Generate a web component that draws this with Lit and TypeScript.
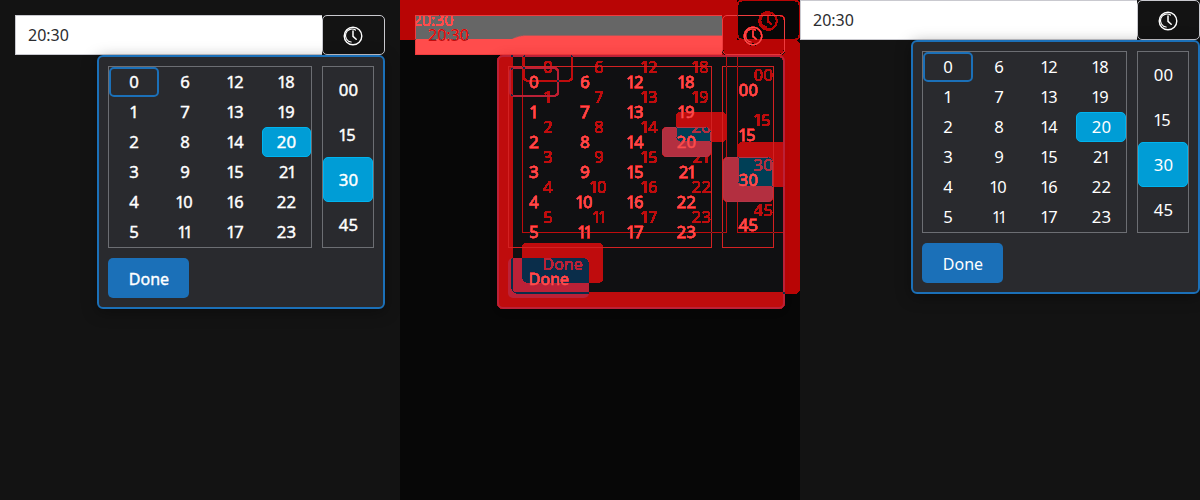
import { LitElement, html, css, svg } from "lit";
import { customElement, property } from "lit/decorators.js";

const HOURS = Array.from({ length: 24 }, (_, i) => String(i));
const MINUTES = ["00", "15", "30", "45"];

const label = (text: string) => {
  const cls = text === "11" ? "ones" : text === "21" ? "last" : text.length === 2 && text[0] === "1" ? "one" : "wide";
  return html`<span class="label ${cls}">${text}</span>`;
};

@customElement("time-picker")
class TimePicker extends LitElement {
  @property({ type: Boolean, reflect: true }) inset = false;

  static styles = css`
    :host {
      display: block;
      box-sizing: border-box;
      width: 400px;
      height: 500px;
      background: #131313;
      color: #fff;
      font: 400 16px/24px "Noto Sans", "Open Sans", sans-serif;
      overflow: hidden;
    }
    :host([inset]) {
      padding: 15px;
    }
    .picker {
      display: flex;
      flex-direction: column;
      align-items: flex-end;
    }
    .field {
      display: flex;
      width: 100%;
      height: 40px;
    }
    .value {
      flex: 1;
      box-sizing: border-box;
      padding: 7px 12px;
      border: 1px solid #c9c9cf;
      border-right: 0;
      background: #fff;
      color: #2b2c30;
    }
    .toggle {
      display: flex;
      align-items: center;
      justify-content: center;
      box-sizing: border-box;
      width: 63px;
      padding: 2px 1px 0 0;
      border: 1px solid #c9c9cf;
      border-radius: 5px;
    }
    .popup {
      position: relative;
      box-sizing: border-box;
      width: 289px;
      padding: 9px;
      border: 2px solid #1b70b8;
      border-radius: 6px;
      background: #292a2e;
      box-shadow: 0 3px 15px rgba(0, 0, 0, 0.35);
    }
    :host([inset]) .popup {
      width: 288px;
      -webkit-text-stroke: 0.4px #fff;
    }
    .lists {
      display: flex;
      justify-content: space-between;
    }
    .hours {
      display: grid;
      grid-template: repeat(6, 30px) / repeat(4, 50px);
      grid-auto-flow: column;
      justify-content: space-between;
      box-sizing: border-box;
      width: 205px;
      border: 1px solid #6c6e73;
    }
    :host([inset]) .hours {
      grid-template-columns: 49.6px 49.6px 49.6px 49.3px;
      width: 204px;
    }
    .minutes {
      display: grid;
      grid-template: repeat(4, 45px) / 50px;
      border: 1px solid #6c6e73;
    }
    .cell {
      display: flex;
      align-items: center;
      justify-content: center;
      box-sizing: border-box;
      border: 1px solid transparent;
      border-radius: 5px;
    }
    .minutes .cell {
      padding-top: 1px;
    }
    .focus {
      border: 2px solid #1b70b8;
    }
    .on {
      background: #009dd6;
      border-color: #00b4ef;
    }
    .label {
      display: block;
      font-size: 15.5px;
    }
    .wide {
      letter-spacing: 0.2px;
      transform: translateX(0.5px) scaleX(1.08);
    }
    .one {
      letter-spacing: -1.2px;
      transform: translateX(-1.3px) scaleX(1.06);
    }
    .last {
      letter-spacing: -1.2px;
      transform: translateX(0.5px) scaleX(1.06);
    }
    .ones {
      letter-spacing: -2.6px;
      transform: translateX(-0.8px);
    }
    .done {
      display: flex;
      align-items: center;
      justify-content: center;
      box-sizing: border-box;
      width: 81px;
      height: 40px;
      margin-top: 10px;
      padding: 1px 0 0 1px;
      border-radius: 5px;
      background: #1b70b8;
    }
  `;

  render() {
    return html`
      <div class="picker">
        <div class="field">
          <div class="value">20:30</div>
          <div class="toggle">
            <svg width="20" height="20" viewBox="0 0 20 20" fill="none" stroke="#fff" stroke-linecap="round">
              ${svg`<circle cx="10" cy="10" r="8.8" stroke-width="1.4"/>
              <path d="M12.5 4.1A6.5 6.5 0 1 0 8.2 16" stroke-width="1.2"/>
              <path d="M10 5V10.3L13.2 13.2" stroke-width="1.5"/>`}
            </svg>
          </div>
        </div>
        <div class="popup">
          <div class="lists">
            <div class="hours">
              ${HOURS.map((h) => html`<div class="cell ${h === "0" ? "focus" : h === "20" ? "on" : ""}">${label(h)}</div>`)}
            </div>
            <div class="minutes">
              ${MINUTES.map((m) => html`<div class="cell ${m === "30" ? "on" : ""}">${label(m)}</div>`)}
            </div>
          </div>
          <div class="done">Done</div>
        </div>
      </div>
    `;
  }
}

// Dims the pixels that agree between both renders and tints the rest red.
@customElement("picker-diff")
class PickerDiff extends LitElement {
  static styles = css`
    :host {
      display: grid;
      width: 400px;
      height: 500px;
      overflow: hidden;
    }
    .layer {
      grid-area: 1 / 1;
    }
    .compare {
      display: grid;
      isolation: isolate;
      filter: url(#mark);
    }
    .second {
      mix-blend-mode: difference;
    }
    .defs {
      position: absolute;
    }
  `;

  render() {
    return html`
      <svg class="defs" width="0" height="0">
        <filter id="mark" x="0" y="0" width="100%" height="100%" color-interpolation-filters="sRGB">
          <feColorMatrix values="20 20 20 0 -2.6  0 0 0 0 0  0 0 0 0 0  0 0 0 0 1" />
          <feColorMatrix values="1 0 0 0 0  0 0 0 0 0  0 0 0 0 0  0.1 0 0 0 0.6" />
        </filter>
      </svg>
      <time-picker class="layer" inset></time-picker>
      <div class="layer compare">
        <time-picker class="layer" inset></time-picker>
        <time-picker class="layer second"></time-picker>
      </div>
    `;
  }
}

@customElement("app-root")
class AppRoot extends LitElement {
  static styles = css`
    :host {
      display: flex;
      width: 1200px;
      height: 500px;
      background: #131313;
    }
  `;

  render() {
    return html`
      <time-picker inset></time-picker>
      <picker-diff></picker-diff>
      <time-picker></time-picker>
    `;
  }
}
